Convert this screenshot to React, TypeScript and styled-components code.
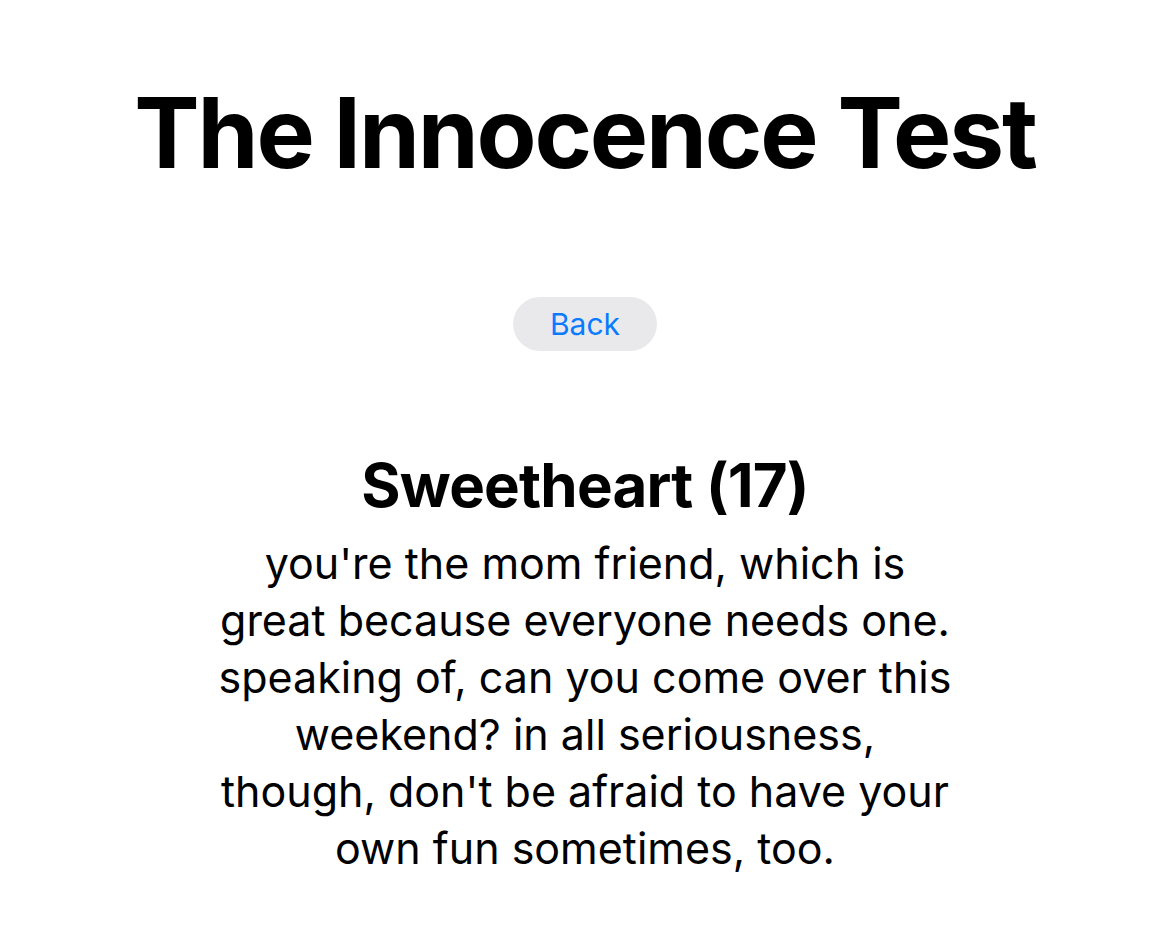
import React from "react";
import styled, { createGlobalStyle } from "styled-components";

const GlobalStyle = createGlobalStyle`
  body {
    margin: 0;
    background: #ffffff;
    font-family: Inter, "Liberation Sans", sans-serif;
    color: #000000;
  }
`;

const Page = styled.main`
  display: flex;
  flex-direction: column;
  align-items: center;
  padding-top: 73px;
`;

const Title = styled.h1`
  margin: 0;
  font-size: 98px;
  font-weight: 700;
  line-height: 120px;
  letter-spacing: -2.2px;
`;

const BackButton = styled.button`
  margin-top: 104px;
  height: 54px;
  padding: 0 37px;
  border: none;
  border-radius: 27px;
  background: #e9e9eb;
  color: #0a7aff;
  font-family: Inter, "Liberation Sans", sans-serif;
  font-size: 30px;
  font-weight: 400;
  cursor: pointer;
`;

const Result = styled.section`
  margin-top: 98px;
  display: flex;
  flex-direction: column;
  align-items: center;
  text-align: center;
`;

const ResultName = styled.h2`
  margin: 0;
  font-size: 60px;
  font-weight: 700;
  line-height: 72px;
  letter-spacing: -0.8px;
`;

const ResultText = styled.p`
  margin: 14px 0 0;
  font-size: 43px;
  line-height: 57px;
`;

export default function App() {
  return (
    <>
      <GlobalStyle />
      <Page>
        <Title>The Innocence Test</Title>
        <BackButton>Back</BackButton>
        <Result>
          <ResultName>Sweetheart (17)</ResultName>
          <ResultText>
            you're the mom friend, which is
            <br />
            great because everyone needs one.
            <br />
            speaking of, can you come over this
            <br />
            weekend? in all seriousness,
            <br />
            though, don't be afraid to have your
            <br />
            own fun sometimes, too.
          </ResultText>
        </Result>
      </Page>
    </>
  );
}
